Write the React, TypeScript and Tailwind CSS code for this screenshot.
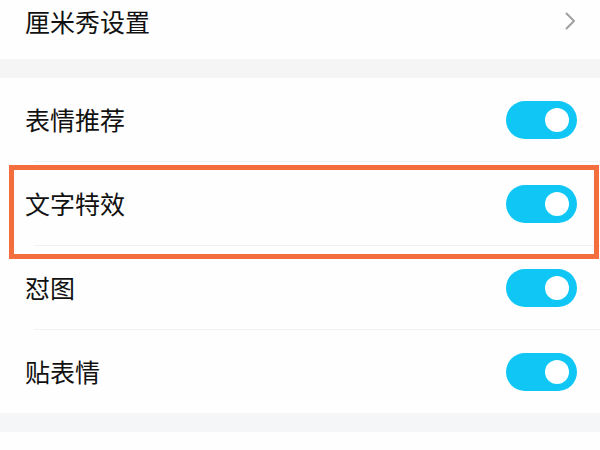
import React from "react";

const toggles = ["表情推荐", "文字特效", "怼图", "贴表情"];

function Toggle() {
  return (
    <span className="flex h-[38px] w-[71px] items-center justify-end rounded-full bg-[#0fc6f4] pr-[8px]">
      <span className="h-[24px] w-[24px] rounded-full bg-white" />
    </span>
  );
}

export default function App() {
  return (
    <div
      className="relative h-[450px] w-[600px] overflow-hidden bg-[#fefefe] text-[#111]"
      style={{ fontFamily: '"Noto Sans CJK SC", "Noto Sans", sans-serif' }}
    >
      <div className="flex h-[59px] items-center justify-between pb-[17px] pl-[25px] pr-[24px]">
        <span className="text-[25px] leading-none">厘米秀设置</span>
        <svg width="11" height="18" viewBox="0 0 11 18" fill="none">
          <path d="M1.5 1.5 L9 9 L1.5 16.5" stroke="#a0a0a0" strokeWidth="2" strokeLinecap="round" strokeLinejoin="round" />
        </svg>
      </div>

      <div className="h-[19px] bg-[#f5f5f5]" />

      <div className="flex flex-col">
        {toggles.map((label, i) => (
          <div key={label} className="flex flex-col">
            <div className="flex h-[83px] items-center justify-between pl-[25px] pr-[23px]">
              <span className="text-[25px] leading-none">{label}</span>
              <Toggle />
            </div>
            {i < toggles.length - 1 && <div className="ml-[34px] h-px bg-[#f1f1f3]" />}
          </div>
        ))}
      </div>

      <div className="h-[19px] bg-[#f5f6f8]" />

      <div className="pointer-events-none absolute left-[9px] top-[165px] h-[94px] w-[590px] border-[5px] border-[#f36d3d]" />
    </div>
  );
}
